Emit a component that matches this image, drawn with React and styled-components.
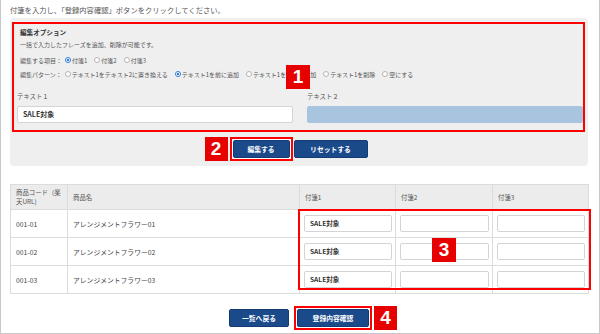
import React from 'react'
import styled, { createGlobalStyle } from 'styled-components'

const GlobalStyle = createGlobalStyle`
  body {
    margin: 0;
    background: #fff;
    font-family: "Noto Sans CJK JP", "Noto Sans", sans-serif;
    color: #444;
  }
`

const items = ['付箋1', '付箋2', '付箋3']
const patterns = [
  'テキスト1をテキスト2に置き換える',
  'テキスト1を前に追加',
  'テキスト1を後ろに追加',
  'テキスト1を削除',
  '空にする',
]
const rows = [
  { code: '001-01', name: 'アレンジメントフラワー01' },
  { code: '001-02', name: 'アレンジメントフラワー02' },
  { code: '001-03', name: 'アレンジメントフラワー03' },
]

function Radio({ label, checked }) {
  return (
    <Option>
      <Dot checked={checked} />
      {label}
    </Option>
  )
}

function App() {
  return (
    <>
      <GlobalStyle />
      <Frame>
        <Intro>付箋を入力し、「登録内容確認」ボタンをクリックしてください。</Intro>
        <Panel>
          <Highlight>
            <Heading>編集オプション</Heading>
            <Line>一括で入力したフレーズを追加、削除が可能です。</Line>
            <RadioLine top={3}>
              <span>編集する項目：</span>
              {items.map((t, i) => (
                <Radio key={t} label={t} checked={i === 0} />
              ))}
            </RadioLine>
            <RadioLine top={2}>
              <span>編集パターン：</span>
              {patterns.map((t, i) => (
                <Radio key={t} label={t} checked={i === 1} />
              ))}
            </RadioLine>
            <TextGrid>
              <Field>
                <FieldLabel>テキスト１</FieldLabel>
                <TextBox>SALE対象</TextBox>
              </Field>
              <Field>
                <FieldLabel>テキスト２</FieldLabel>
                <TextBox disabled />
              </Field>
            </TextGrid>
            <Badge style={{ left: 272, top: 41 }}>1</Badge>
          </Highlight>
          <ButtonRow>
            <Outline>
              <SideBadge side="left">2</SideBadge>
              <Button w={57}>編集する</Button>
            </Outline>
            <Button w={74}>リセットする</Button>
          </ButtonRow>
        </Panel>

        <TableWrap>
          <Table>
            <colgroup>
              <col style={{ width: 57 }} />
              <col style={{ width: 232 }} />
              <col style={{ width: 96 }} />
              <col style={{ width: 97 }} />
              <col style={{ width: 96 }} />
            </colgroup>
            <thead>
              <tr>
                <Th>商品コード（楽天URL)</Th>
                <Th>商品名</Th>
                <Th>付箋1</Th>
                <Th>付箋2</Th>
                <Th>付箋3</Th>
              </tr>
            </thead>
            <tbody>
              {rows.map((r) => (
                <tr key={r.code}>
                  <Td>{r.code}</Td>
                  <Td>{r.name}</Td>
                  <InputTd><CellInput>SALE対象</CellInput></InputTd>
                  <InputTd><CellInput /></InputTd>
                  <InputTd><CellInput /></InputTd>
                </tr>
              ))}
            </tbody>
          </Table>
          <TableMark />
          <Badge style={{ left: 422, top: 54 }}>3</Badge>
        </TableWrap>

        <FooterRow>
          <Button w={60}>一覧へ戻る</Button>
          <Outline>
            <Button w={72}>登録内容確認</Button>
            <SideBadge side="right">4</SideBadge>
          </Outline>
        </FooterRow>
      </Frame>
    </>
  )
}

export default App

const Frame = styled.div`
  width: 600px;
  height: 334px;
  box-sizing: border-box;
  border: 1px solid #c9c9c9;
  border-top: none;
  padding: 0 11px 0 9px;
  overflow: hidden;
`

const Intro = styled.div`
  height: 18px;
  line-height: 18px;
  padding-top: 1px;
  box-sizing: border-box;
  font-size: 7.3px;
  color: #555;
`

const Panel = styled.div`
  background: #efefef;
  border-radius: 4px;
  padding: 4px 3px 5px 2px;
`

const Highlight = styled.div`
  position: relative;
  border: 2px solid #f00;
  padding: 2px 0 7px 3px;
`

const Heading = styled.div`
  line-height: 12px;
  font-size: 6.6px;
  font-weight: bold;
  color: #333;
  padding-left: 3px;
`

const Line = styled.div`
  margin-top: 1px;
  line-height: 12px;
  font-size: 6px;
  color: #555;
  padding-left: 3px;
`

const RadioLine = styled.div`
  display: flex;
  align-items: center;
  margin-top: ${(p) => p.top}px;
  height: 12px;
  font-size: 6px;
  color: #555;
  padding-left: 3px;
  white-space: nowrap;
  gap: 7px;

  & > span:first-child {
    margin-right: -4px;
  }
`

const Option = styled.span`
  display: inline-flex;
  align-items: center;
  gap: 1px;
`

const Dot = styled.span`
  width: 6px;
  height: 6px;
  border-radius: 50%;
  box-sizing: border-box;
  border: ${(p) => (p.checked ? '1.5px solid #2b7be0' : '1px solid #b5b5b5')};
  background: ${(p) =>
    p.checked ? 'radial-gradient(circle, #2b7be0 0 1.2px, #fff 1.5px)' : '#fff'};
`

const TextGrid = styled.div`
  display: grid;
  grid-template-columns: 1fr 1fr;
  column-gap: 14px;
  margin-top: 12px;
`

const Field = styled.div`
  display: flex;
  flex-direction: column;
  gap: 4px;
`

const FieldLabel = styled.div`
  line-height: 10px;
  font-size: 6.4px;
  color: #555;
`

const TextBox = styled.div`
  height: 17px;
  box-sizing: border-box;
  border: 1px solid ${(p) => (p.disabled ? '#a9c4df' : '#d4d4d4')};
  border-radius: 2px;
  background: ${(p) => (p.disabled ? '#a9c4df' : '#fff')};
  font-size: 7px;
  font-weight: bold;
  color: #333;
  line-height: 15px;
  padding-left: 5px;
`

const Badge = styled.div`
  position: absolute;
  width: 24px;
  height: 24px;
  background: #e60000;
  color: #fff;
  font-family: "Liberation Sans", Arial, sans-serif;
  font-weight: bold;
  font-size: 19px;
  line-height: 24px;
  text-align: center;
`

const SideBadge = styled(Badge)`
  top: -2px;
  width: 23px;
  ${(p) => (p.side === 'left' ? 'right: calc(100% + 4px);' : 'left: calc(100% + 4px);')}
`

const ButtonRow = styled.div`
  display: flex;
  justify-content: center;
  align-items: center;
  gap: 1px;
  margin-top: 5px;
`

const Outline = styled.div`
  position: relative;
  border: 2px solid #f00;
  padding: 1px;
  background: #fff;
  display: flex;
`

const Button = styled.div`
  width: ${(p) => p.w}px;
  height: 18px;
  box-sizing: border-box;
  background: #1b4a8b;
  border: 1px solid #143c74;
  border-radius: 2px;
  color: #fff;
  font-size: 6.8px;
  font-weight: bold;
  display: flex;
  align-items: center;
  justify-content: center;
`

const TableWrap = styled.div`
  position: relative;
  margin-top: 18px;
`

const Table = styled.table`
  width: 578px;
  border-collapse: collapse;
  table-layout: fixed;
`

const Th = styled.th`
  height: 24px;
  background: #ececec;
  border: 1px solid #dcdcdc;
  padding: 0 5px;
  font-size: 6.4px;
  font-weight: normal;
  color: #555;
  text-align: left;
  line-height: 9px;
`

const Td = styled.td`
  height: 27px;
  border: 1px solid #dcdcdc;
  padding: 0 5px;
  font-size: 6.8px;
  color: #444;
  white-space: nowrap;
`

const InputTd = styled(Td)`
  padding: 0 3px 0 4px;
`

const CellInput = styled(TextBox)`
  font-size: 6.6px;
`

const TableMark = styled.div`
  position: absolute;
  left: 288px;
  top: 25px;
  width: 293px;
  height: 81px;
  box-sizing: border-box;
  border: 2px solid #f00;
  pointer-events: none;
`

const FooterRow = styled.div`
  display: flex;
  justify-content: center;
  align-items: center;
  gap: 5px;
  margin-top: 12px;
  padding-left: 3px;
`
